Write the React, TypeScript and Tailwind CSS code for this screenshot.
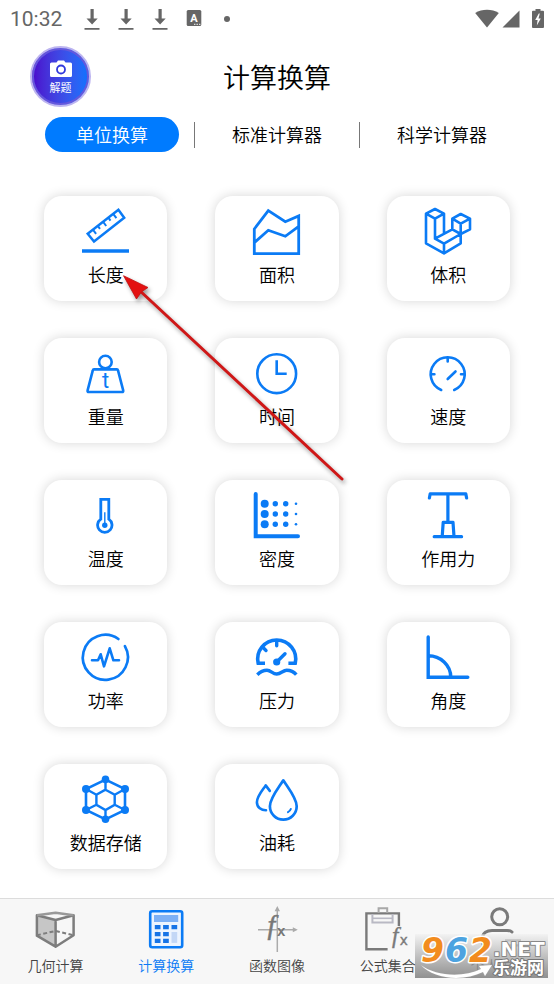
import type { ReactNode } from "react";

const BLUE = "#0b7bf5";

type Item = { label: string; icon: ReactNode };

const units: Item[] = [
  {
    label: "长度",
    icon: (
      <>
        <path d="M0 44H47" strokeWidth="3.6" />
        <path strokeWidth="2.5" d="M5.7 26.7 36.4 2.7 42.2 10.7 12 34.5Z" />
        <path strokeWidth="2" d="M10.9 22.6l3.200 4.300M15.8 18.8l2.200 3M21 14.7l3.200 4.300M26.3 10.6l2.200 3M31.2 6.8l3.200 4.300" />
      </>
    ),
  },
  {
    label: "面积",
    icon: (
      <path
        strokeWidth="2.8"
        d="M1.3 22 15.3 3.6 32.3 14.7 45.7 8.9V46.6H1.3ZM1.3 35.7 15.3 23.3 32.3 29.3 45.7 19.3"
      />
    ),
  },
  {
    label: "体积",
    icon: (
      <path
        strokeWidth="2.6"
        strokeLinejoin="round"
        d="M2 6.7 11 2 20 6.7 11 11.7ZM2 6.7V36.3L20 46.4 36.7 36.3V27L20 36.7V46.4M11 11.7V31.7L20 36.7M20 6.7V27M11 31.7 28.3 22.3M28.3 11.7 36.7 7 46 11.7 36.7 16.7ZM28.3 11.7V22.3L36.7 27 46 22.3V11.7M36.7 16.7V27"
      />
    ),
  },
  {
    label: "重量",
    icon: (
      <>
        <circle cx="23.4" cy="13" r="6.3" strokeWidth="2.6" />
        <path strokeWidth="2.6" strokeLinejoin="round" d="M12 20.4H34.8Q35.8 20.4 36 21.4L41.2 41.4Q41.5 43 40 43H6.8Q5.3 43 5.6 41.4L10.8 21.4Q11 20.4 12 20.4Z" />
        <text x="20" y="39.4" fontSize="22" fontFamily="Roboto, sans-serif" fill={BLUE} stroke="none">t</text>
      </>
    ),
  },
  {
    label: "时间",
    icon: (
      <>
        <circle cx="23.7" cy="24.7" r="19.4" strokeWidth="2.6" />
        <path d="M23.7 11.3V24.7H33.7" strokeWidth="2.6" />
      </>
    ),
  },
  {
    label: "速度",
    icon: (
      <path
        strokeWidth="2.6"
        strokeLinecap="round"
        d="M17.2 41A17 17 0 1 1 30.2 41M23.7 9V12.4M6.7 25.3H10.4M37 25.3H40.7M23.7 30 31.5 22.5"
      />
    ),
  },
  {
    label: "温度",
    icon: (
      <>
        <path strokeWidth="2.8" d="M18.8 8.3H26.8V28.2A7.2 7.2 0 1 1 18.8 28.2Z" />
        <path strokeWidth="1.4" d="M22.8 21.3V34" />
        <circle cx="22.8" cy="34.3" r="2.7" fill={BLUE} stroke="none" />
      </>
    ),
  },
  {
    label: "密度",
    icon: (
      <>
        <path strokeWidth="4" strokeLinecap="round" d="M2.7 3V45.3H45" />
        <g fill={BLUE} stroke="none">
          {[12.7, 23, 33.3].map((y) => (
            <g key={y}>
              <circle cx="11.7" cy={y} r="4" />
              <circle cx="22.3" cy={y} r="2.7" />
              <circle cx="32.7" cy={y} r="2.7" />
              <circle cx="43" cy={y} r="1.3" />
            </g>
          ))}
        </g>
      </>
    ),
  },
  {
    label: "作用力",
    icon: (
      <path
        strokeWidth="3.2"
        strokeLinecap="round"
        strokeLinejoin="round"
        d="M5.4 7 6.2 2.8H41.8L42.6 7M23.9 2.8V31M19.2 31.3H29L30 45.5H18.2ZM10.2 45.7H37.6"
      />
    ),
  },
  {
    label: "功率",
    icon: (
      <>
        <path strokeWidth="2.7" strokeLinecap="round" d="M42.9 13.2A22.5 22.5 0 1 1 36.4 6" />
        <path
          strokeWidth="2.6"
          strokeLinecap="round"
          strokeLinejoin="round"
          d="M10 27.3H16L18.7 21.3 22 33.3 27.7 15.3 31.4 27.3H37"
        />
      </>
    ),
  },
  {
    label: "压力",
    icon: (
      <>
        <path strokeWidth="3.6" d="M12 30.3H5.2A19 19 0 1 1 42.2 30.3H35.4" />
        <path strokeWidth="3.4" strokeLinecap="round" d="M23.7 9V12.8M10.5 15 13 17.5M23.7 29 32 20.7" />
        <circle cx="23.7" cy="29" r="3.6" fill={BLUE} stroke="none" />
        <path strokeWidth="3.4" d="M4.3 41.7C7 39 11 37.3 14 37.3C18 37.3 19.5 41 23.7 41S30 37.3 33.7 37.3C37 37.3 41 39 43.3 41.7" />
      </>
    ),
  },
  {
    label: "角度",
    icon: <path strokeWidth="3.4" strokeLinecap="round" d="M4.2 4V44.3H43.8M4.2 22.7C16.5 22.7 26.8 32 26.8 44.3" />,
  },
  {
    label: "数据存储",
    icon: (
      <>
        <path strokeWidth="2.6" d="M23.5 4.7 43 14V35L23.5 44.3 4 35V14Z" />
        <path
          strokeWidth="2.4"
          d="M23.5 14.7 32.7 19.7V29.7L23.5 35 14.4 29.7V19.7ZM23.5 4.7V14.7M43 14 32.7 19.7M43 35 32.7 29.7M23.5 44.3V35M4 35 14.4 29.7M4 14 14.4 19.7"
        />
        <g fill={BLUE} stroke="none">
          <circle cx="23.5" cy="4.4" r="3.8" />
          <circle cx="43" cy="14" r="4" />
          <circle cx="43" cy="35" r="4" />
          <circle cx="23.5" cy="44.3" r="3.8" />
          <circle cx="4" cy="35" r="4" />
          <circle cx="4" cy="14" r="4" />
        </g>
      </>
    ),
  },
  {
    label: "油耗",
    icon: (
      <>
        <path strokeWidth="2.7" strokeLinejoin="round" d="M30.3 5.3C34 11.5 43.7 23 43.7 31.2A13.4 13.4 0 0 1 16.9 31.2C16.9 23 26.6 11.5 30.3 5.3Z" />
        <path strokeWidth="2.6" strokeLinecap="round" strokeLinejoin="round" d="M16.8 15.9 12.7 10.4C8.5 16.5 3.9 21.5 3.9 27.2C3.9 32.5 8.5 35.4 13 35.3" />
        <path strokeWidth="2" strokeLinecap="round" d="M35 37.2Q37 36.2 37.8 34" />
      </>
    ),
  },
];

const SERIF = "'Liberation Serif', serif";

const navItems: Item[] = [
  {
    label: "几何计算",
    icon: (
      <>
        <path fill="#c6c6c6" d="M5.9 8.3 24.6 13V40L5.9 28.7Z" />
        <g fill="none" stroke="#7d7d7d" strokeWidth="2.5" strokeLinejoin="round">
          <path d="M5.9 8.3 24.6 13 42.6 8.3V28.3L24.6 39.7 5.9 28.7ZM24.6 13V39.7" />
          <path stroke="#999" d="M5.9 8.3 24.6 5.7 42.6 8.3" />
          <path strokeWidth="2" strokeDasharray="4 2.5" d="M5.9 28.3 24.6 23.9 42.6 28.3" />
        </g>
      </>
    ),
  },
  {
    label: "计算换算",
    icon: (
      <>
        <rect x="8.2" y="4.2" width="32" height="36" rx="2" fill="#edf4fe" stroke={BLUE} strokeWidth="2.6" />
        <rect x="12" y="8" width="24.2" height="7" fill="#7db0f5" />
        <path
          fill="#1673e6"
          d="M12.8 18h5.7v4.2h-5.7zM21.1 18h5.7v4.2h-5.7zM29.5 18h5.7v4.2h-5.7zM12.8 25h5.7v4.2h-5.7zM21.1 25h5.7v4.2h-5.7zM12.8 31.7h5.7v4.2h-5.7zM21.1 31.7h5.7v4.2h-5.7z"
        />
        <path fill="#c3d7f6" d="M29.5 25h5.7v10.9h-5.7z" />
      </>
    ),
  },
  {
    label: "函数图像",
    icon: (
      <>
        <g stroke="#ababab" strokeWidth="1.5" fill="#ababab">
          <path d="M24.3 2V45M5 22.7H42" />
          <path stroke="none" d="M24.3-1 27 4.2H21.6ZM44.8 22.7 39.8 20.2V25.2Z" />
        </g>
        <text x="14.5" y="27" fontSize="28" fontStyle="italic" fontFamily={SERIF} fill="#777" stroke="#777" strokeWidth=".5">f</text>
        <text x="24" y="29.3" fontSize="15" fontWeight="700" fontFamily="'Liberation Sans', sans-serif" fill="#777">x</text>
      </>
    ),
  },
  {
    label: "公式集合",
    icon: (
      <>
        <g fill="none" stroke="#7a7a7a" strokeWidth="2.4">
          <path d="M34.9 19V6.4H2.4V42.3H23.6" />
          <path stroke="#a8a8a8" strokeWidth="2" d="M14.6 6V1.2H23.2V6" />
          <path stroke="#b9b9c4" strokeWidth="2" d="M8.4 7V15.4H28.6V7" />
          <path stroke="#b9b9c4" strokeWidth="1.6" d="M8.4 11.3H28.6" />
        </g>
        <text x="28" y="35.6" fontSize="23" fontStyle="italic" fontFamily={SERIF} fill="#7a7a7a" stroke="#7a7a7a" strokeWidth=".4">f</text>
        <text x="36" y="38" fontSize="15" fontFamily="'Liberation Sans', sans-serif" fill="#7a7a7a" stroke="#7a7a7a" strokeWidth=".4">x</text>
      </>
    ),
  },
  {
    label: "个人中心",
    icon: (
      <>
        <g fill="none" stroke="#7a7a7a" strokeWidth="3" strokeLinecap="round">
          <circle cx="24.7" cy="9.8" r="8" />
          <path d="M7.5 37V31C7.5 26 12 23.4 17 23.4H32C34.5 23.4 36 24 37 25" />
        </g>
        <path stroke="#aaa" strokeWidth="2.4" d="M30 33.4H46M30 38.4H46" />
      </>
    ),
  },
];

function Download() {
  return (
    <svg className="h-6 w-4" viewBox="0 0 16 24" fill="#666">
      <path d="M6.5 2h3.200v9.500h4L8.1 17.500 2.500 11.500h4zM.5 21h15v1.800H.5z" />
    </svg>
  );
}

function StatusBar() {
  return (
    <div className="flex h-[38px] items-center justify-between px-[10px] text-[#666]">
      <div className="flex items-center">
        <span className="font-[Roboto,sans-serif] text-[21px] leading-6">10:32</span>
        <div className="ml-[22px] flex gap-[18px]">
          <Download />
          <Download />
          <Download />
          <svg className="h-6 w-4" viewBox="0 0 16 24">
            <rect x=".7" y="3" width="14.600" height="16" rx="1.500" fill="#666" />
            <text x="8" y="14.800" textAnchor="middle" fontSize="11" fontWeight="700" fontFamily="Roboto, sans-serif" fill="#fff">A</text>
            <path d="M8 17.300h1.400M10.500 17.300h1.400M13 17.300h1.400" stroke="#ddd" strokeWidth="1.200" />
          </svg>
        </div>
        <span className="ml-[22px] size-[6px] rounded-full bg-[#666]" />
      </div>
      <div className="flex items-center">
        <svg className="h-5 w-6" viewBox="0 0 24 20" fill="#666">
          <path d="M12 18.500.2 4C7-.4 17-.4 23.800 4Z" />
        </svg>
        <svg className="ml-[3px] h-5 w-[18px]" viewBox="0 0 18 20" fill="#666">
          <path d="M17.500 1.500V18.500H.5Z" />
        </svg>
        <svg className="ml-3 h-5 w-3" viewBox="0 0 12 20">
          <path d="M3.500 0h5v1.800H11q1 0 1 1V18q0 1-1 1H1q-1 0-1-1V2.800q0-1 1-1h2.500z" fill="#666" />
          <path d="M6.800 4.500 3.200 11H5.600L4.800 16.500 8.800 9.500H6.500L7.800 4.500Z" fill="#fff" />
        </svg>
      </div>
    </div>
  );
}

function Header() {
  return (
    <header className="mt-2 grid grid-cols-3 items-center px-[30px]">
      <button className="flex size-[61px] flex-col items-center justify-center rounded-full border-2 border-[#bdb5f0] bg-linear-to-r from-[#4a00cc] to-[#0074ff] text-white shadow-[inset_0_0_0_2px_#6558dc]">
        <svg className="h-[17px] w-[22px]" viewBox="0 0 22 17">
          <path d="M1.500 2.500h5L8 .5h6l1.500 2h5q1.500 0 1.500 1.500v11.500q0 1.500-1.500 1.500h-19Q0 17 0 15.500V4q0-1.500 1.500-1.500Z" fill="#fff" />
          <circle cx="11" cy="9.500" r="4" fill="none" stroke="#3038dc" strokeWidth="1.800" />
        </svg>
        <span className="mt-[3px] text-[11px] leading-[14px]">解题</span>
      </button>
      <h1 className="text-center text-[27px] leading-9 font-[350]">计算换算</h1>
    </header>
  );
}

function Tabs() {
  return (
    <div className="mx-[30px] mt-[10px] flex items-center text-[18px] leading-6 font-[350]">
      <button className="mx-[15px] h-[35px] flex-1 rounded-full bg-[#007bff] pb-px text-white">单位换算</button>
      <span className="h-[26px] w-px bg-[#777]" />
      <button className="mx-[15px] h-[35px] flex-1 pb-px">标准计算器</button>
      <span className="h-[26px] w-px bg-[#777]" />
      <button className="mx-[15px] h-[35px] flex-1 pb-px">科学计算器</button>
    </div>
  );
}

function Pointer() {
  return (
    <svg
      className="pointer-events-none absolute top-[114px] left-[110px] h-[225px] w-[245px] drop-shadow-[2px_3px_2px_rgba(0,0,0,0.4)]"
      viewBox="110 266 245 225"
    >
      <path d="M138 289 342 479" stroke="#cf1717" strokeWidth="3" strokeLinecap="round" />
      <path d="M123.500 275.700 148 287.500 141.500 291.800 136.500 299Z" fill="#e31111" stroke="#c01010" strokeWidth=".8" />
    </svg>
  );
}

function Watermark() {
  return (
    <div className="absolute right-[6px] bottom-[6px] bg-linear-to-b from-[#eeeeee]/50 to-[#858585]/90">
      <svg className="h-[44px] w-[133px] overflow-visible" viewBox="0 0 133 44" fontWeight="700" paintOrder="stroke" strokeLinejoin="round">
        <path d="M6 31C20 42 48 44 66 35L64 32 77 31 70 42 68 38C48 48 18 45 6 31Z" fill="#fff" stroke="#aaa" strokeWidth=".5" />
        <g fontFamily="'DejaVu Sans', sans-serif">
          <g fontSize="33" fontStyle="italic" stroke="#fff" strokeWidth="3">
            <text x="6" y="28" fill="#f28c1e">9</text>
            <text x="30" y="28" fill="#4da3e0">6</text>
            <text x="54" y="28" fill="#f28c1e">2</text>
          </g>
          <text x="78" y="22" fontSize="20" fill="#fff" stroke="#888" strokeWidth="2">.NET</text>
        </g>
        <text x="78" y="40" fontSize="17" fill="#fff" stroke="#777" strokeWidth="2">乐游网</text>
      </svg>
    </div>
  );
}

export default function App() {
  return (
    <div className="relative flex min-h-screen flex-col bg-white font-['Noto_Sans_CJK_SC',sans-serif] text-black">
      <StatusBar />
      <Header />
      <Tabs />
      <main className="relative px-[44px] pt-[44px] pb-7">
        <div className="grid grid-cols-3 gap-x-12 gap-y-[37px]">
          {units.map((u) => (
            <button
              key={u.label}
              className="flex h-[105px] flex-col items-center rounded-[18px] bg-white pt-[11px] shadow-[0_0_12px_rgba(0,0,0,0.16)]"
            >
              <svg className="size-12 overflow-visible" viewBox="0 0 48 48" fill="none" stroke={BLUE}>
                {u.icon}
              </svg>
              <span className="mt-[7px] text-[18px] leading-6 font-[350]">{u.label}</span>
            </button>
          ))}
        </div>
        <Pointer />
      </main>
      <nav className="mt-auto grid h-[86px] grid-cols-5 border-t border-[#dcdcdc] bg-[#f7f7f7] pt-2">
        {navItems.map((n, i) => (
          <a key={n.label} href="#" className={`flex flex-col items-center ${i === 1 ? "text-[#0b7bf5]" : "text-[#444]"}`}>
            <svg className="size-12 overflow-visible" viewBox="0 0 48 48">
              {n.icon}
            </svg>
            <span className="text-[14px] leading-5 font-[350]">{n.label}</span>
          </a>
        ))}
      </nav>
      <Watermark />
    </div>
  );
}
